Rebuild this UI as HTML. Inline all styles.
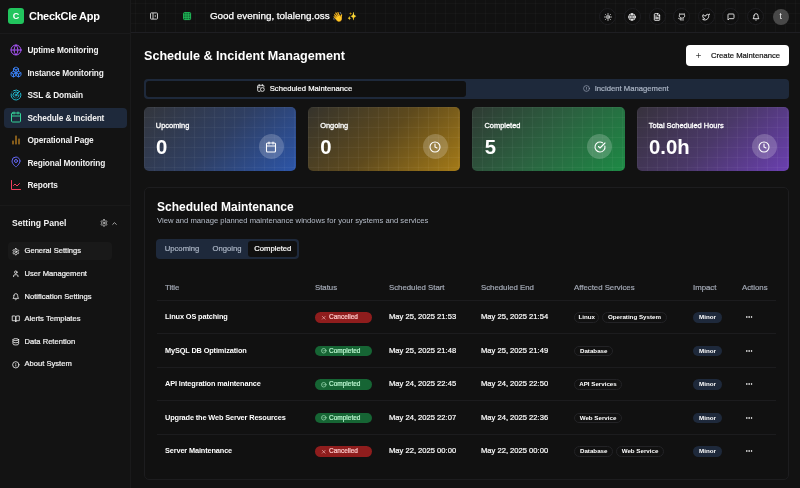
<!DOCTYPE html>
<html lang="en">
<head>
<meta charset="utf-8">
<title>CheckCle App - Schedule &amp; Incident Management</title>
<style>
*{box-sizing:border-box;margin:0;padding:0}
html,body{width:800px;height:488px;overflow:hidden;background:#121212}
body{font-family:"Liberation Sans",sans-serif;color:#fff;position:relative;-webkit-font-smoothing:antialiased}
.abs{position:absolute}
svg{display:block;overflow:visible}
.ic{fill:none;stroke:currentColor;stroke-width:2;stroke-linecap:round;stroke-linejoin:round}

/* sidebar */
#sb{position:absolute;left:0;top:0;width:131px;height:488px;background:#131313;border-right:1px solid #1a1a1b}
#logo{position:absolute;left:8px;top:8px;width:16px;height:16px;border-radius:3px;background:#22c55e;color:#fff;font-weight:700;font-size:9px;line-height:16px;text-align:center}
#brand{position:absolute;left:29px;top:9.2px;font-size:11px;line-height:14px;font-weight:700;white-space:nowrap;letter-spacing:-0.3px}
#sbline{position:absolute;left:0;top:33px;width:130px;height:1px;background:#1a1a1b}
.nav{position:absolute;left:4px;width:122.5px;height:20.5px;border-radius:4px;color:#f1f1f1;font-size:8.3px;letter-spacing:-0.13px;font-weight:700;line-height:20.5px;padding-left:23.4px;white-space:nowrap}
.nav svg{position:absolute;left:5.9px;top:3.8px;width:12px;height:12px}
.nav.on{background:#1e293b}
#sbline2{position:absolute;left:0;top:204.5px;width:130px;height:1px;background:#191919}
#sp{position:absolute;left:12px;top:217.3px;font-size:8.6px;font-weight:700;line-height:12px;color:#f1f1f1;white-space:nowrap}
.set{position:absolute;left:8px;width:104px;height:18.2px;border-radius:4px;color:#f4f4f4;font-size:7.6px;font-weight:400;line-height:18.2px;padding-left:16.5px;white-space:nowrap}
.set svg{position:absolute;left:4px;top:5.3px;width:7.6px;height:7.6px;color:#fff}
.set.on{background:#191919}

/* header */
#hd{position:absolute;left:131px;top:0;width:669px;height:33px;border-bottom:1px solid #1e1e22;
 background-color:#111;
 background-image:linear-gradient(to right,rgba(255,255,255,.02) 1px,transparent 1px),linear-gradient(to bottom,rgba(255,255,255,.02) 1px,transparent 1px);
 background-size:10px 10px;background-position:4px 3px}
#greet{position:absolute;left:78.9px;top:9px;-webkit-text-stroke:0.25px #fff;font-size:9.9px;line-height:14px;font-weight:400;color:#fff;white-space:nowrap}
.hb{position:absolute;top:8px;width:17px;height:17px;border-radius:50%;border:1px solid #1f1f22;background:#0f0f0f;color:#fff}
.hb svg{position:absolute;left:3.5px;top:3.5px;width:8px;height:8px}

/* main */
#h1{position:absolute;left:144px;top:47px;font-size:12.6px;line-height:18px;font-weight:700;white-space:nowrap}
#cbtn{position:absolute;left:686px;top:45px;width:103px;height:21px;border-radius:4px;background:#fff;color:#111;font-size:7.68px;line-height:21px;white-space:nowrap}
#tabs{position:absolute;left:143.7px;top:78.7px;width:645.3px;height:20.2px;border-radius:4px;background:#1e293b}
#tabs .a{position:absolute;left:2px;top:2px;width:320px;height:16.2px;border-radius:3px;background:#101010}
.tl{position:absolute;top:0;height:20px;line-height:20px;font-size:7.7px;white-space:nowrap}

.card{position:absolute;top:107.2px;width:152.4px;height:63.8px;border-radius:5px;overflow:hidden}
.card .g{position:absolute;inset:0;
 background-image:linear-gradient(to right,rgba(255,255,255,.04) 1px,transparent 1px),linear-gradient(to bottom,rgba(255,255,255,.04) 1px,transparent 1px);
 background-size:10px 10px;background-position:0 0}
.card .t{position:absolute;left:12.2px;top:13.5px;-webkit-text-stroke:0.3px;font-size:7.45px;line-height:10px;color:#fff;white-space:nowrap}
.card .v{position:absolute;left:12.4px;top:27.9px;font-size:20.3px;line-height:24px;font-weight:700;color:#fff;white-space:nowrap}
.card .c{position:absolute;left:115px;top:27px;width:25px;height:25px;border-radius:50%;background:rgba(255,255,255,.2);color:#fff}
.card .c svg{position:absolute;left:6.5px;top:6.5px;width:12px;height:12px}

#panel{position:absolute;left:143.5px;top:187px;width:645.5px;height:292.5px;border:1px solid #1d1d1f;border-radius:5px;background:#111}
#ph{position:absolute;left:157px;top:197.5px;font-size:12px;line-height:18px;font-weight:700;white-space:nowrap}
#psub{position:absolute;left:157px;top:216px;font-size:7.67px;line-height:10px;color:#b6bdc9;white-space:nowrap}
#st{position:absolute;left:156.4px;top:238.8px;width:143px;height:20px;border-radius:4px;background:#1e293b}
#st .a{position:absolute;left:91.5px;top:2px;width:49.5px;height:16px;border-radius:3px;background:#101010}
#st span{position:absolute;top:0;line-height:20px;font-size:7.7px;white-space:nowrap}

.th{position:absolute;top:283px;font-size:7.8px;line-height:10px;color:#a3a9b5;white-space:nowrap}
.rl{position:absolute;left:157px;width:619px;height:1px;background:#1c1c1e}
.td{position:absolute;font-size:7.6px;line-height:12px;white-space:nowrap;color:#fff}
.b{font-weight:700;font-size:7.35px;letter-spacing:-0.13px;margin-top:0.3px}
.bd{position:absolute;height:10.5px;border-radius:6px;font-size:6.5px;line-height:10.5px;white-space:nowrap}
.bd svg{position:absolute;left:5.5px;top:2.5px;width:5.5px;height:5.5px}
.red{background:#8f1d1d;color:#fecaca}
.grn{background:#166534;color:#bbf7d0}
.sv{border:1px solid #232326;background:#111;color:#fff;font-weight:700;text-align:center;line-height:8.5px;font-size:6.2px}
.mn{background:#1e293b;color:#fff;font-weight:700;text-align:center;font-size:6.2px}
#av{position:absolute;left:641.8px;top:8.5px;width:16px;height:16px;border-radius:50%;background:#484848;color:#f0f0f0;font-size:8.5px;line-height:15px;text-align:center}
.em{position:absolute;color:#f5c542;line-height:14px;white-space:nowrap}
.set,.tl,#cbtn,.td,#st span,.bd,.th{-webkit-text-stroke:0.2px}
.b,.sv,.mn{-webkit-text-stroke:0}
#root{position:absolute;left:0;top:0;width:800px;height:488px;will-change:transform}
</style>
</head>
<body>
<div id="root">
<div id="sb">
<div id="logo">C</div><div id="brand">CheckCle App</div><div id="sbline"></div>
<div class="nav" style="top:40.2px"><svg class="ic" viewBox="0 0 24 24" style="stroke-width:2;color:#a855f7"><circle cx="12" cy="12" r="10"/><path d="M12 2a14.5 14.5 0 0 0 0 20 14.5 14.5 0 0 0 0-20"/><path d="M2 12h20"/></svg><span>Uptime Monitoring</span></div>
<div class="nav" style="top:62.7px"><svg class="ic" viewBox="0 0 24 24" style="stroke-width:2;color:#3b82f6"><path d="M2.97 12.92A2 2 0 0 0 2 14.63v3.24a2 2 0 0 0 .97 1.71l3 1.8a2 2 0 0 0 2.06 0L12 19v-5.5l-5-3-4.03 2.42Z"/><path d="m7 16.5-4.74-2.85"/><path d="m7 16.5 5-3"/><path d="M7 16.5v5.17"/><path d="M12 13.5V19l3.97 2.38a2 2 0 0 0 2.06 0l3-1.8a2 2 0 0 0 .97-1.71v-3.24a2 2 0 0 0-.97-1.71L17 10.5l-5 3Z"/><path d="m17 16.5-5-3"/><path d="m17 16.5 4.74-2.85"/><path d="M17 16.5v5.17"/><path d="M7.97 4.42A2 2 0 0 0 7 6.13v4.37l5 3 5-3V6.13a2 2 0 0 0-.97-1.71l-3-1.8a2 2 0 0 0-2.06 0l-3 1.8Z"/><path d="M12 8 7.26 5.15"/><path d="m12 8 4.74-2.85"/><path d="M12 13.5V8"/></svg><span>Instance Monitoring</span></div>
<div class="nav" style="top:85.2px"><svg class="ic" viewBox="0 0 24 24" style="stroke-width:2;color:#22b8cf"><path d="M19.07 4.93A10 10 0 0 0 6.99 3.34"/><path d="M4 6h.01"/><path d="M2.29 9.62A10 10 0 1 0 21.31 8.35"/><path d="M16.24 7.76A6 6 0 1 0 8.23 16.67"/><path d="M12 18h.01"/><path d="M17.99 11.66A6 6 0 0 1 15.77 16.67"/><circle cx="12" cy="12" r="2"/><path d="m13.41 10.59 5.66-5.66"/></svg><span>SSL &amp; Domain</span></div>
<div class="nav on" style="top:107.7px"><svg class="ic" viewBox="0 0 24 24" style="stroke-width:2;color:#34d399"><path d="M8 2v4"/><path d="M16 2v4"/><rect width="18" height="18" x="3" y="4" rx="2"/><path d="M3 10h18"/></svg><span>Schedule &amp; Incident</span></div>
<div class="nav" style="top:130.2px"><svg class="ic" viewBox="0 0 24 24" style="stroke-width:2;color:#f5a524"><path d="M18 20V10"/><path d="M12 20V4"/><path d="M6 20v-6"/></svg><span>Operational Page</span></div>
<div class="nav" style="top:152.7px"><svg class="ic" viewBox="0 0 24 24" style="stroke-width:2;color:#6366f1"><path d="M20 10c0 6-8 12-8 12s-8-6-8-12a8 8 0 0 1 16 0Z"/><circle cx="12" cy="10" r="3"/></svg><span>Regional Monitoring</span></div>
<div class="nav" style="top:175.2px"><svg class="ic" viewBox="0 0 24 24" style="stroke-width:2;color:#f43f5e"><path d="M3 3v18h18"/><path d="m19 9-5 5-4-4-3 3"/></svg><span>Reports</span></div>
<div id="sbline2"></div>
<div id="sp">Setting Panel</div>
<div class="abs" style="left:100px;top:219px;width:8px;height:8px;color:#e5e5e5"><svg class="ic" viewBox="0 0 24 24" style="stroke-width:2"><path d="M12.22 2h-.44a2 2 0 0 0-2 2v.18a2 2 0 0 1-1 1.73l-.43.25a2 2 0 0 1-2 0l-.15-.08a2 2 0 0 0-2.73.73l-.22.38a2 2 0 0 0 .73 2.73l.15.1a2 2 0 0 1 1 1.72v.51a2 2 0 0 1-1 1.74l-.15.09a2 2 0 0 0-.73 2.73l.22.38a2 2 0 0 0 2.73.73l.15-.08a2 2 0 0 1 2 0l.43.25a2 2 0 0 1 1 1.73V20a2 2 0 0 0 2 2h.44a2 2 0 0 0 2-2v-.18a2 2 0 0 1 1-1.73l.43-.25a2 2 0 0 1 2 0l.15.08a2 2 0 0 0 2.73-.73l.22-.39a2 2 0 0 0-.73-2.73l-.15-.08a2 2 0 0 1-1-1.74v-.5a2 2 0 0 1 1-1.74l.15-.09a2 2 0 0 0 .73-2.73l-.22-.38a2 2 0 0 0-2.73-.73l-.15.08a2 2 0 0 1-2 0l-.43-.25a2 2 0 0 1-1-1.73V4a2 2 0 0 0-2-2z"/><circle cx="12" cy="12" r="3"/></svg></div>
<div class="abs" style="left:110.5px;top:219.5px;width:7px;height:7px;color:#e5e5e5"><svg class="ic" viewBox="0 0 24 24" style="stroke-width:2.4"><path d="m18 15-6-6-6 6"/></svg></div>
<div class="set on" style="top:242.3px"><svg class="ic" viewBox="0 0 24 24" style="stroke-width:2.4"><path d="M12.22 2h-.44a2 2 0 0 0-2 2v.18a2 2 0 0 1-1 1.73l-.43.25a2 2 0 0 1-2 0l-.15-.08a2 2 0 0 0-2.73.73l-.22.38a2 2 0 0 0 .73 2.73l.15.1a2 2 0 0 1 1 1.72v.51a2 2 0 0 1-1 1.74l-.15.09a2 2 0 0 0-.73 2.73l.22.38a2 2 0 0 0 2.73.73l.15-.08a2 2 0 0 1 2 0l.43.25a2 2 0 0 1 1 1.73V20a2 2 0 0 0 2 2h.44a2 2 0 0 0 2-2v-.18a2 2 0 0 1 1-1.73l.43-.25a2 2 0 0 1 2 0l.15.08a2 2 0 0 0 2.73-.73l.22-.39a2 2 0 0 0-.73-2.73l-.15-.08a2 2 0 0 1-1-1.74v-.5a2 2 0 0 1 1-1.74l.15-.09a2 2 0 0 0 .73-2.73l-.22-.38a2 2 0 0 0-2.73-.73l-.15.08a2 2 0 0 1-2 0l-.43-.25a2 2 0 0 1-1-1.73V4a2 2 0 0 0-2-2z"/><circle cx="12" cy="12" r="3"/></svg><span>General Settings</span></div>
<div class="set" style="top:264.9px"><svg class="ic" viewBox="0 0 24 24" style="stroke-width:2.4"><path d="M19 21v-2a4 4 0 0 0-4-4H9a4 4 0 0 0-4 4v2"/><circle cx="12" cy="7" r="4"/></svg><span>User Management</span></div>
<div class="set" style="top:287.5px"><svg class="ic" viewBox="0 0 24 24" style="stroke-width:2.4"><path d="M6 8a6 6 0 0 1 12 0c0 7 3 9 3 9H3s3-2 3-9"/><path d="M10.3 21a1.94 1.94 0 0 0 3.4 0"/></svg><span>Notification Settings</span></div>
<div class="set" style="top:310.2px"><svg class="ic" viewBox="0 0 24 24" style="stroke-width:2.4"><path d="M2 3h6a4 4 0 0 1 4 4v14a3 3 0 0 0-3-3H2z"/><path d="M22 3h-6a4 4 0 0 0-4 4v14a3 3 0 0 1 3-3h7z"/></svg><span>Alerts Templates</span></div>
<div class="set" style="top:332.8px"><svg class="ic" viewBox="0 0 24 24" style="stroke-width:2.4"><ellipse cx="12" cy="5" rx="9" ry="3"/><path d="M3 5V19A9 3 0 0 0 21 19V5"/><path d="M3 12A9 3 0 0 0 21 12"/></svg><span>Data Retention</span></div>
<div class="set" style="top:355.4px"><svg class="ic" viewBox="0 0 24 24" style="stroke-width:2.4"><circle cx="12" cy="12" r="10"/><path d="M12 16v-4"/><path d="M12 8h.01"/></svg><span>About System</span></div>
</div>
<div id="hd">
<svg class="abs" style="left:18px;top:11px" width="10" height="10" viewBox="0 0 10 10"><rect x="1.5" y="1.9" width="7" height="6.2" rx="0.8" fill="none" stroke="#dcdcdc" stroke-width="0.9"/><path d="M4 2v6" stroke="#dcdcdc" stroke-width="0.9" fill="none"/><path d="M6.9 3.9 5.8 5l1.1 1.1" stroke="#dcdcdc" stroke-width="0.7" fill="none"/></svg>
<svg class="abs" style="left:51px;top:11px" width="10" height="10" viewBox="0 0 10 10"><rect x="1.6" y="1.6" width="7" height="7" rx="0.8" fill="#0f5a2c" stroke="#22c55e" stroke-width="0.9"/><path d="M1.6 3.95h7M1.6 6.25h7M3.95 1.6v7M6.25 1.6v7" stroke="#22c55e" stroke-width="0.8" fill="none"/></svg>
<div id="greet"><span id="gt">Good evening, tolaleng.oss</span></div>
<div class="em" style="left:201px;top:9.5px;font-size:9.5px">&#x1F44B;</div><div class="em" style="left:215.5px;top:10px;font-size:8px">&#x2728;</div>
<div class="hb" style="left:468.0px"><svg class="ic" viewBox="0 0 24 24" style="stroke-width:2.5"><circle cx="12" cy="12" r="4"/><path d="M12 2v2"/><path d="M12 20v2"/><path d="m4.93 4.93 1.41 1.41"/><path d="m17.66 17.66 1.41 1.41"/><path d="M2 12h2"/><path d="M20 12h2"/><path d="m6.34 17.66-1.41 1.41"/><path d="m19.07 4.93-1.41 1.41"/></svg></div>
<div class="hb" style="left:492.8px"><svg class="ic" viewBox="0 0 24 24" style="stroke-width:2.5"><circle cx="12" cy="12" r="10"/><path d="M12 2a14.5 14.5 0 0 0 0 20 14.5 14.5 0 0 0 0-20"/><path d="M2 12h20"/></svg></div>
<div class="hb" style="left:517.5px"><svg class="ic" viewBox="0 0 24 24" style="stroke-width:2.5"><path d="M15 2H6a2 2 0 0 0-2 2v16a2 2 0 0 0 2 2h12a2 2 0 0 0 2-2V7Z"/><path d="M14 2v4a2 2 0 0 0 2 2h4"/><path d="M10 9H8"/><path d="M16 13H8"/><path d="M16 17H8"/></svg></div>
<div class="hb" style="left:542.3px"><svg class="ic" viewBox="0 0 24 24" style="stroke-width:2.5"><path d="M15 22v-4a4.8 4.8 0 0 0-1-3.5c3 0 6-2 6-5.5.08-1.25-.27-2.48-1-3.5.28-1.15.28-2.35 0-3.5 0 0-1 0-3 1.500-2.640-.5-5.360-.5-8 0C6 2 5 2 5 2c-.3 1.150-.3 2.350 0 3.500A5.403 5.403 0 0 0 4 9c0 3.500 3 5.500 6 5.500-.39.490-.68 1.050-.85 1.650-.17.600-.22 1.230-.15 1.850v4"/><path d="M9 18c-4.510 2-5-2-7-2"/></svg></div>
<div class="hb" style="left:566.8px"><svg class="ic" viewBox="0 0 24 24" style="stroke-width:2.5"><path d="M22 4s-.7 2.100-2 3.400c1.600 10-9.400 17.300-18 11.600 2.200.1 4.400-.600 6-2C3 15.500.5 9.600 3 5c2.200 2.600 5.600 4.100 9 4-.9-4.200 4-6.600 7-3.800 1.100 0 3-1.200 3-1.200z"/></svg></div>
<div class="hb" style="left:591.3px"><svg class="ic" viewBox="0 0 24 24" style="stroke-width:2.5"><path d="M21 15a2 2 0 0 1-2 2H7l-4 4V5a2 2 0 0 1 2-2h14a2 2 0 0 1 2 2z"/></svg></div>
<div class="hb" style="left:616.0px"><svg class="ic" viewBox="0 0 24 24" style="stroke-width:2.5"><path d="M6 8a6 6 0 0 1 12 0c0 7 3 9 3 9H3s3-2 3-9"/><path d="M10.3 21a1.94 1.94 0 0 0 3.4 0"/></svg></div>
<div id="av">t</div>
</div>
<div id="h1">Schedule &amp; Incident Management</div>
<div id="cbtn"><span class="abs" style="left:9px;top:7px;width:7px;height:7px"><svg class="ic" viewBox="0 0 24 24" style="stroke-width:2"><path d="M5 12h14"/><path d="M12 5v14"/></svg></span><span class="abs" style="left:25px;top:0">Create Maintenance</span></div>
<div id="tabs"><div class="a"></div>
<span class="abs" style="left:114px;top:6px;width:7px;height:7px;color:#fff"><svg width="8" height="8" viewBox="0 0 8 8" style="position:absolute;left:-0.3px;top:-0.5px"><path d="M2.2.6v1.2M5.4.6v1.2M3 7.3H1.4a.7.7 0 0 1-.7-.7V2a.7.7 0 0 1 .7-.7h4.8a.7.7 0 0 1 .7.7v1M.7 3.2h2.4" fill="none" stroke="#fff" stroke-width=".8" stroke-linecap="round"/><circle cx="5.4" cy="5.5" r="1.9" fill="none" stroke="#fff" stroke-width=".8"/></svg></span><span class="tl" style="left:126px;color:#fff">Scheduled Maintenance</span>
<span class="abs" style="left:439px;top:6px;width:7px;height:7px;color:#aab4c4"><svg class="ic" viewBox="0 0 24 24" style="stroke-width:2"><circle cx="12" cy="12" r="10"/><path d="M12 8v4"/><path d="M12 16h.01"/></svg></span><span class="tl" style="left:451px;color:#aab4c4">Incident Management</span>
</div>
<div class="card" style="left:143.6px;background:linear-gradient(135deg,#33363d 0%,#2f3f63 50%,#2c55a8 100%)"><div class="g"></div><div class="t">Upcoming</div><div class="v">0</div><div class="c"><svg class="ic" viewBox="0 0 24 24" style="stroke-width:2.2"><path d="M8 2v4"/><path d="M16 2v4"/><rect width="18" height="18" x="3" y="4" rx="2"/><path d="M3 10h18"/></svg></div></div>
<div class="card" style="left:307.95px;background:linear-gradient(135deg,#35332c 0%,#5e4a1d 50%,#a47a17 100%)"><div class="g"></div><div class="t">Ongoing</div><div class="v">0</div><div class="c"><svg class="ic" viewBox="0 0 24 24" style="stroke-width:2.2"><circle cx="12" cy="12" r="10"/><path d="M12 6v6l4 2"/></svg></div></div>
<div class="card" style="left:472.3px;background:linear-gradient(135deg,#2f3a33 0%,#2b6240 50%,#1d8a45 100%)"><div class="g"></div><div class="t">Completed</div><div class="v">5</div><div class="c"><svg class="ic" viewBox="0 0 24 24" style="stroke-width:2.2"><path d="M21.801 10A10 10 0 1 1 17 3.335"/><path d="m9 11 3 3L22 4"/></svg></div></div>
<div class="card" style="left:636.65px;background:linear-gradient(135deg,#37323d 0%,#4a3868 50%,#6a3fb0 100%)"><div class="g"></div><div class="t">Total Scheduled Hours</div><div class="v">0.0h</div><div class="c"><svg class="ic" viewBox="0 0 24 24" style="stroke-width:2.2"><circle cx="12" cy="12" r="10"/><path d="M12 6v6l4 2"/></svg></div></div>
<div id="panel"></div>
<div id="ph">Scheduled Maintenance</div>
<div id="psub">View and manage planned maintenance windows for your systems and services</div>
<div id="st"><div class="a"></div><span style="left:8.3px;color:#aab4c4">Upcoming</span><span style="left:56.1px;color:#aab4c4">Ongoing</span><span style="left:97.8px;color:#fff">Completed</span></div>
<div class="th" style="left:165px">Title</div>
<div class="th" style="left:315px">Status</div>
<div class="th" style="left:389px">Scheduled Start</div>
<div class="th" style="left:481px">Scheduled End</div>
<div class="th" style="left:574px">Affected Services</div>
<div class="th" style="left:693px">Impact</div>
<div class="th" style="left:742px">Actions</div>
<div class="rl" style="top:299.6px"></div>
<div class="td b" style="left:165px;top:311.0px">Linux OS patching</div>
<div class="bd red" style="left:315px;top:312.0px;width:57px"><svg class="ic" viewBox="0 0 24 24" style="stroke-width:2.5"><path d="M18 6 6 18"/><path d="m6 6 12 12"/></svg><span class="abs" style="left:14px">Cancelled</span></div>
<div class="td" style="left:389px;top:311.0px">May 25, 2025 21:53</div>
<div class="td" style="left:481px;top:311.0px">May 25, 2025 21:54</div>
<div class="bd sv" style="left:574px;top:312.0px;width:25.4px">Linux</div>
<div class="bd sv" style="left:602.0px;top:312.0px;width:64.9px">Operating System</div>
<div class="bd mn" style="left:693px;top:312.0px;width:29px">Minor</div>
<div class="abs" style="left:745px;top:313.0px;width:8px;height:8px;color:#fff"><svg class="ic" viewBox="0 0 24 24" style="stroke-width:2.5"><circle cx="12" cy="12" r="1"/><circle cx="19" cy="12" r="1"/><circle cx="5" cy="12" r="1"/></svg></div>
<div class="rl" style="top:333.2px"></div>
<div class="td b" style="left:165px;top:344.5px">MySQL DB Optimization</div>
<div class="bd grn" style="left:315px;top:345.5px;width:57px"><svg class="ic" viewBox="0 0 24 24" style="stroke-width:2.5"><circle cx="12" cy="12" r="10"/><path d="m9 12 2 2 4-4"/></svg><span class="abs" style="left:14px">Completed</span></div>
<div class="td" style="left:389px;top:344.5px">May 25, 2025 21:48</div>
<div class="td" style="left:481px;top:344.5px">May 25, 2025 21:49</div>
<div class="bd sv" style="left:574px;top:345.5px;width:39.4px">Database</div>
<div class="bd mn" style="left:693px;top:345.5px;width:29px">Minor</div>
<div class="abs" style="left:745px;top:346.5px;width:8px;height:8px;color:#fff"><svg class="ic" viewBox="0 0 24 24" style="stroke-width:2.5"><circle cx="12" cy="12" r="1"/><circle cx="19" cy="12" r="1"/><circle cx="5" cy="12" r="1"/></svg></div>
<div class="rl" style="top:366.8px"></div>
<div class="td b" style="left:165px;top:378.0px">API Integration maintenance</div>
<div class="bd grn" style="left:315px;top:379.0px;width:57px"><svg class="ic" viewBox="0 0 24 24" style="stroke-width:2.5"><circle cx="12" cy="12" r="10"/><path d="m9 12 2 2 4-4"/></svg><span class="abs" style="left:14px">Completed</span></div>
<div class="td" style="left:389px;top:378.0px">May 24, 2025 22:45</div>
<div class="td" style="left:481px;top:378.0px">May 24, 2025 22:50</div>
<div class="bd sv" style="left:574px;top:379.0px;width:48px">API Services</div>
<div class="bd mn" style="left:693px;top:379.0px;width:29px">Minor</div>
<div class="abs" style="left:745px;top:380.0px;width:8px;height:8px;color:#fff"><svg class="ic" viewBox="0 0 24 24" style="stroke-width:2.5"><circle cx="12" cy="12" r="1"/><circle cx="19" cy="12" r="1"/><circle cx="5" cy="12" r="1"/></svg></div>
<div class="rl" style="top:400.4px"></div>
<div class="td b" style="left:165px;top:411.5px">Upgrade the Web Server Resources</div>
<div class="bd grn" style="left:315px;top:412.5px;width:57px"><svg class="ic" viewBox="0 0 24 24" style="stroke-width:2.5"><circle cx="12" cy="12" r="10"/><path d="m9 12 2 2 4-4"/></svg><span class="abs" style="left:14px">Completed</span></div>
<div class="td" style="left:389px;top:411.5px">May 24, 2025 22:07</div>
<div class="td" style="left:481px;top:411.5px">May 24, 2025 22:36</div>
<div class="bd sv" style="left:574px;top:412.5px;width:48px">Web Service</div>
<div class="bd mn" style="left:693px;top:412.5px;width:29px">Minor</div>
<div class="abs" style="left:745px;top:413.5px;width:8px;height:8px;color:#fff"><svg class="ic" viewBox="0 0 24 24" style="stroke-width:2.5"><circle cx="12" cy="12" r="1"/><circle cx="19" cy="12" r="1"/><circle cx="5" cy="12" r="1"/></svg></div>
<div class="rl" style="top:434.0px"></div>
<div class="td b" style="left:165px;top:445.0px">Server Maintenance</div>
<div class="bd red" style="left:315px;top:446.0px;width:57px"><svg class="ic" viewBox="0 0 24 24" style="stroke-width:2.5"><path d="M18 6 6 18"/><path d="m6 6 12 12"/></svg><span class="abs" style="left:14px">Cancelled</span></div>
<div class="td" style="left:389px;top:445.0px">May 22, 2025 00:00</div>
<div class="td" style="left:481px;top:445.0px">May 22, 2025 00:00</div>
<div class="bd sv" style="left:574px;top:446.0px;width:39.4px">Database</div>
<div class="bd sv" style="left:616.0px;top:446.0px;width:48px">Web Service</div>
<div class="bd mn" style="left:693px;top:446.0px;width:29px">Minor</div>
<div class="abs" style="left:745px;top:447.0px;width:8px;height:8px;color:#fff"><svg class="ic" viewBox="0 0 24 24" style="stroke-width:2.5"><circle cx="12" cy="12" r="1"/><circle cx="19" cy="12" r="1"/><circle cx="5" cy="12" r="1"/></svg></div>
</div>
</body>
</html>
